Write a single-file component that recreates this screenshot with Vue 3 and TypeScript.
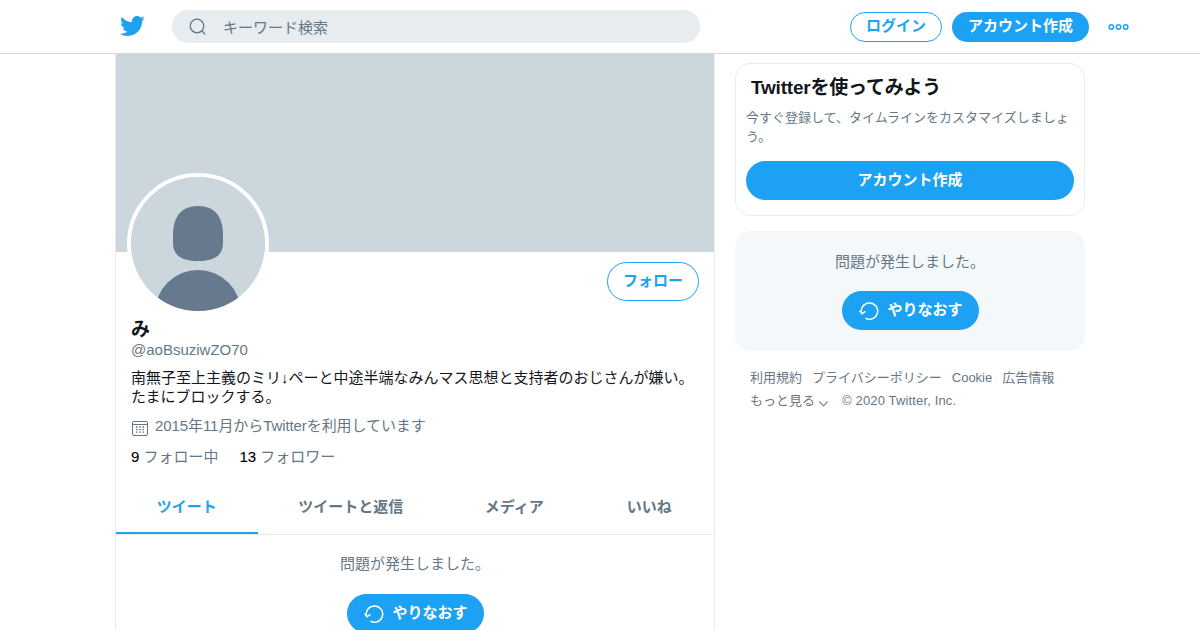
<script setup lang="ts">
const tabs: { label: string; width: number; active?: boolean }[] = [
  { label: 'ツイート', width: 142, active: true },
  { label: 'ツイートと返信', width: 187 },
  { label: 'メディア', width: 141 },
  { label: 'いいね', width: 130 },
]
const bird = 'M23.643 4.937c-.835.37-1.732.62-2.675.733.962-.576 1.7-1.49 2.048-2.578-.9.534-1.897.922-2.958 1.13-.85-.904-2.06-1.47-3.4-1.47-2.572 0-4.658 2.086-4.658 4.66 0 .364.042.718.12 1.06-3.873-.195-7.304-2.05-9.602-4.868-.4.69-.63 1.49-.63 2.342 0 1.616.823 3.043 2.072 3.878-.764-.025-1.482-.234-2.11-.583v.06c0 2.257 1.605 4.14 3.737 4.568-.392.106-.803.162-1.227.162-.3 0-.593-.028-.877-.082.593 1.85 2.313 3.198 4.352 3.234-1.595 1.25-3.604 1.995-5.786 1.995-.376 0-.747-.022-1.112-.065 2.062 1.323 4.51 2.093 7.14 2.093 8.57 0 13.255-7.098 13.255-13.254 0-.2-.005-.402-.014-.602.91-.658 1.7-1.477 2.323-2.41z'
const retry = 'M2.6 13.4A8.2 8.2 0 1 1 6.4 18.2M0.6 10.6l2.4 3.2 3.4-2.4'
</script>

<template>
  <div class="page">
    <header class="topbar">
      <svg class="bird" viewBox="0 0 24 24"><path :d="bird" /></svg>
      <div class="search">
        <svg class="search-icon" viewBox="0 0 20 20"><circle cx="9" cy="9" r="6.8" /><path d="M14 14l3.4 3.6" /></svg>
        <span>キーワード検索</span>
      </div>
      <button class="btn outline login">ログイン</button>
      <button class="btn solid signup">アカウント作成</button>
      <svg class="more" viewBox="0 0 22 8"><circle cx="3.5" cy="4" r="2.3" /><circle cx="11" cy="4" r="2.3" /><circle cx="18.5" cy="4" r="2.3" /></svg>
    </header>

    <div class="columns">
      <main class="profile">
        <div class="banner"></div>
        <div class="identity">
          <div class="avatar">
            <svg viewBox="0 0 134 134">
              <rect width="134" height="134" fill="#ccd6dd" />
              <path d="M67 29C84 29 92 40 92 58V66C92 78 84 84 67 84C50 84 42 78 42 66V58C42 40 50 29 67 29Z" fill="#66798d" />
              <circle cx="67" cy="136" r="43" fill="#66798d" />
            </svg>
          </div>
          <button class="btn outline follow">フォロー</button>
        </div>
        <div class="bio-block">
          <h1 class="name">み</h1>
          <div class="handle">@aoBsuziwZO70</div>
          <p class="bio">南無子至上主義のミリ↓ペーと中途半端なみんマス思想と支持者のおじさんが嫌い。<br />たまにブロックする。</p>
          <div class="joined">
            <svg viewBox="0 0 18 18">
              <rect x="1.5" y="2.5" width="15" height="14" rx="1.5" />
              <path d="M1.5 5.5h15" />
              <path class="dots" d="M5 8h1.6M8.2 8h1.6M11.4 8h1.6M5 10.6h1.6M8.2 10.6h1.6M11.4 10.6h1.6M5 13.2h1.6M8.2 13.2h1.6M11.4 13.2h1.6" />
            </svg>
            <span>2015年11月からTwitterを利用しています</span>
          </div>
          <div class="stats">
            <span><b>9</b> フォロー中</span>
            <span><b>13</b> フォロワー</span>
          </div>
        </div>
        <nav class="tabs">
          <div v-for="t in tabs" :key="t.label" class="tab" :class="{ active: t.active }" :style="{ width: t.width + 'px' }">{{ t.label }}</div>
        </nav>
        <div class="error-inline">
          <div class="err-text">問題が発生しました。</div>
          <button class="btn solid retry">
            <svg viewBox="0 0 20 20"><path :d="retry" /></svg>
            やりなおす
          </button>
        </div>
      </main>

      <aside class="side">
        <section class="card">
          <h2>Twitterを使ってみよう</h2>
          <p>今すぐ登録して、タイムラインをカスタマイズしましょう。</p>
          <button class="btn solid wide">アカウント作成</button>
        </section>
        <section class="err-card">
          <div class="err-text">問題が発生しました。</div>
          <button class="btn solid retry">
            <svg viewBox="0 0 20 20"><path :d="retry" /></svg>
            やりなおす
          </button>
        </section>
        <footer class="foot">
          <div class="foot-row">
            <span>利用規約</span><span>プライバシーポリシー</span><span>Cookie</span><span>広告情報</span>
          </div>
          <div class="foot-row">
            <span class="more-link">もっと見る<svg viewBox="0 0 12 8"><path d="M1.5 1.5l4.5 4.5 4.5-4.5" /></svg></span>
            <span class="copy">© 2020 Twitter, Inc.</span>
          </div>
        </footer>
      </aside>
    </div>
  </div>
</template>

<style scoped>
.page {
  width: 1200px;
  height: 630px;
  overflow: hidden;
  background: #fff;
  font-family: "Liberation Sans", "Noto Sans CJK JP", sans-serif;
  color: #14171a;
}
.topbar {
  box-sizing: border-box;
  height: 54px;
  border-bottom: 1px solid #d5d8da;
  display: flex;
  align-items: center;
  padding-left: 119px;
}
.bird { width: 26px; height: 26px; fill: #1da1f2; flex: none; margin-bottom: 1px; }
.search {
  width: 528px;
  height: 33px;
  margin-left: 27px;
  border-radius: 17px;
  background: #e6ecf0;
  display: flex;
  align-items: center;
  padding-left: 16px;
  padding-bottom: 1px;
  box-sizing: border-box;
  font-size: 15px;
  color: #657786;
}
.search-icon { width: 20px; height: 20px; fill: none; stroke: #657786; stroke-width: 1.3; margin-right: 15px; margin-top: 1px; }
.btn {
  box-sizing: border-box;
  border-radius: 20px;
  font-family: inherit;
  font-weight: 700;
  font-size: 15px;
  padding: 0 0 2px;
  display: flex;
  align-items: center;
  justify-content: center;
  cursor: pointer;
  line-height: 1;
}
.outline { background: #fff; border: 1px solid #1da1f2; color: #1da1f2; }
.solid { background: #1da1f2; border: 0; color: #fff; }
.login { width: 92px; height: 30px; margin-left: 150px; }
.signup { width: 137px; height: 30px; margin-left: 10px; }
.more { width: 21px; height: 8px; margin-left: 19px; fill: none; stroke: #1da1f2; stroke-width: 1.6; }
.columns { display: flex; padding-left: 115px; align-items: flex-start; }
.profile {
  box-sizing: border-box;
  width: 600px;
  height: 576px;
  border-left: 1px solid #e6ecf0;
  border-right: 1px solid #e6ecf0;
}
.banner { height: 198px; background: #ccd6dd; }
.identity {
  height: 66px;
  display: flex;
  justify-content: space-between;
  align-items: flex-start;
  padding: 10px 15px 0 11px;
}
.avatar {
  width: 134px;
  height: 134px;
  margin-top: -89px;
  border: 4px solid #fff;
  border-radius: 50%;
  overflow: hidden;
  flex: none;
  position: relative;
}
.avatar svg { display: block; width: 134px; height: 134px; }
.follow { width: 92px; height: 39px; font-size: 15px; }
.bio-block { padding: 0 15px; margin-top: -11px; }
.name { margin: 0; font-size: 19px; line-height: 26px; font-weight: 700; height: 20px; color: #14171a; }
.handle { font-size: 15px; line-height: 22px; color: #657786; margin-top: 2px; }
.bio { margin: 7px 0 0; font-size: 15px; line-height: 19px; color: #14171a; white-space: nowrap; }
.joined {
  display: flex;
  align-items: center;
  margin-top: 7px;
  height: 22px;
  font-size: 15px;
  letter-spacing: -0.08px;
  color: #657786;
}
.joined svg { width: 18px; height: 18px; margin-right: 6px; margin-top: 7px; fill: none; stroke: #657786; stroke-width: 1; }
.joined .dots { stroke-width: 1.3; }
.stats { display: flex; gap: 21px; margin-top: 10px; font-size: 15px; line-height: 24px; color: #657786; }
.stats b { color: #000; font-weight: 400; -webkit-text-stroke: 0.1px #000; }
.tabs {
  display: flex;
  margin-top: 11px;
  height: 54px;
  border-bottom: 1px solid #e6ecf0;
  box-sizing: content-box;
}
.tab {
  box-sizing: border-box;
  height: 54px;
  display: flex;
  align-items: center;
  justify-content: center;
  font-size: 15px;
  font-weight: 700;
  color: #657786;
  padding-bottom: 3px;
}
.tab.active { color: #1da1f2; border-bottom: 2px solid #1da1f2; padding-bottom: 1px; }
.error-inline { display: flex; flex-direction: column; align-items: center; padding-top: 19px; }
.err-text { font-size: 15px; line-height: 20px; color: #657786; }
.retry { width: 137px; height: 39px; margin-top: 20px; gap: 8px; font-size: 15px; }
.retry svg { width: 20px; height: 20px; fill: none; stroke: #fff; stroke-width: 1.5; flex: none; margin-left: 2px; margin-top: 1px; }
.side { width: 350px; margin-left: 20px; padding-top: 9px; }
.card {
  box-sizing: border-box;
  height: 153px;
  border: 1px solid #e6ecf0;
  border-radius: 15px;
  padding: 11px 10px 0;
}
.card h2 { margin: 0 0 0 5px; font-size: 19px; letter-spacing: -0.2px; line-height: 26px; font-weight: 700; color: #14171a; }
.card p { margin: 7px 0 0; font-size: 13px; line-height: 19px; color: #657786; }
.wide { width: 328px; height: 39px; margin-top: 15px; }
.err-card {
  box-sizing: border-box;
  height: 120px;
  margin-top: 15px;
  background: #f5f8fa;
  border-radius: 15px;
  display: flex;
  flex-direction: column;
  align-items: center;
  padding-top: 21px;
}
.err-card .retry { margin-top: 19px; }
.foot { padding: 15px 15px 0; font-size: 13px; color: #657786; }
.foot-row { display: flex; gap: 10px; line-height: 23px; }
.foot-row + .foot-row { gap: 13px; }
.copy { letter-spacing: 0.15px; }
.more-link { display: inline-flex; align-items: center; }
.more-link svg { width: 11px; height: 8px; margin-left: 3px; margin-top: 6px; fill: none; stroke: #657786; stroke-width: 1.2; }
</style>

<style>
html, body { margin: 0; padding: 0; background: #fff; }
</style>
